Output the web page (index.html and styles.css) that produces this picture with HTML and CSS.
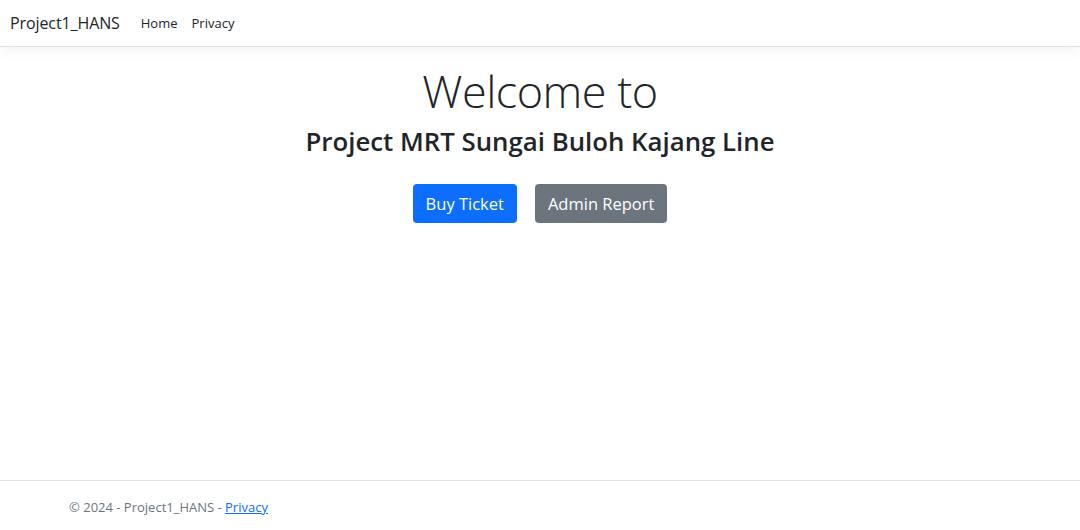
FILE: index.html
```html
<!DOCTYPE html>
<html lang="en">
<head>
<meta charset="utf-8">
<title>Project1_HANS</title>
<link rel="stylesheet" href="styles.css">
</head>
<body>
<div class="page">
  <header class="navbar">
    <a class="brand" href="#">Project1_HANS</a>
    <nav class="nav-links">
      <a href="#" class="nav-link">Home</a>
      <a href="#" class="nav-link">Privacy</a>
    </nav>
  </header>
  <main class="main">
    <h1 class="display">Welcome to</h1>
    <h3 class="subtitle">Project MRT Sungai Buloh Kajang Line</h3>
    <div class="actions">
      <a href="#" class="btn btn-primary">Buy Ticket</a>
      <a href="#" class="btn btn-secondary">Admin Report</a>
    </div>
  </main>
  <footer class="footer">
    <div class="footer-inner">© 2024 - Project1_HANS - <a href="#" class="footer-link">Privacy</a></div>
  </footer>
</div>
</body>
</html>
```
FILE: styles.css
```css
* { box-sizing: border-box; }
html, body { margin: 0; padding: 0; height: 100%; }
body {
  font-family: "Open Sans", "Noto Sans", sans-serif;
  color: #212529;
  background: #fff;
}
.page {
  min-height: 100vh;
  display: flex;
  flex-direction: column;
}
.navbar {
  height: 47px;
  display: flex;
  align-items: center;
  padding: 0 10px;
  background: #fff;
  border-bottom: 1px solid #dee2e6;
  box-shadow: 0 0.25rem 0.75rem rgba(0,0,0,.05);
}
.brand {
  font-size: 16px;
  color: #212529;
  text-decoration: none;
  margin-right: 14px;
  letter-spacing: -0.1px;
}
.nav-links { display: flex; gap: 0; }
.nav-link {
  font-size: 13px;
  color: #212529;
  text-decoration: none;
  padding: 0 7px;
}
.main {
  flex: 1;
  display: flex;
  flex-direction: column;
  align-items: center;
  padding-top: 17px;
}
.display {
  margin: 0 0 8px;
  font-size: 45px;
  font-weight: 300;
  line-height: 1.2;
  letter-spacing: -0.5px;
}
.subtitle {
  margin: 0;
  font-size: 25.8px;
  font-weight: 600;
  line-height: 1.2;
}
.actions {
  display: flex;
  gap: 18px;
  margin-top: 27px;
}
.btn {
  display: inline-flex;
  align-items: center;
  height: 39px;
  padding: 0 13px;
  font-size: 16.5px;
  border-radius: 4px;
  text-decoration: none;
  color: #fff;
}
.btn-primary { background: #0d6efd; }
.btn-secondary { background: #6c757d; }
.footer {
  height: 50px;
  border-top: 1px solid #dee2e6;
  display: flex;
  align-items: center;
  padding-top: 2px;
}
.footer-inner {
  padding-left: 69px;
  font-size: 13px;
  color: #6c757d;
}
.footer-link { color: #0d6efd; }
```
